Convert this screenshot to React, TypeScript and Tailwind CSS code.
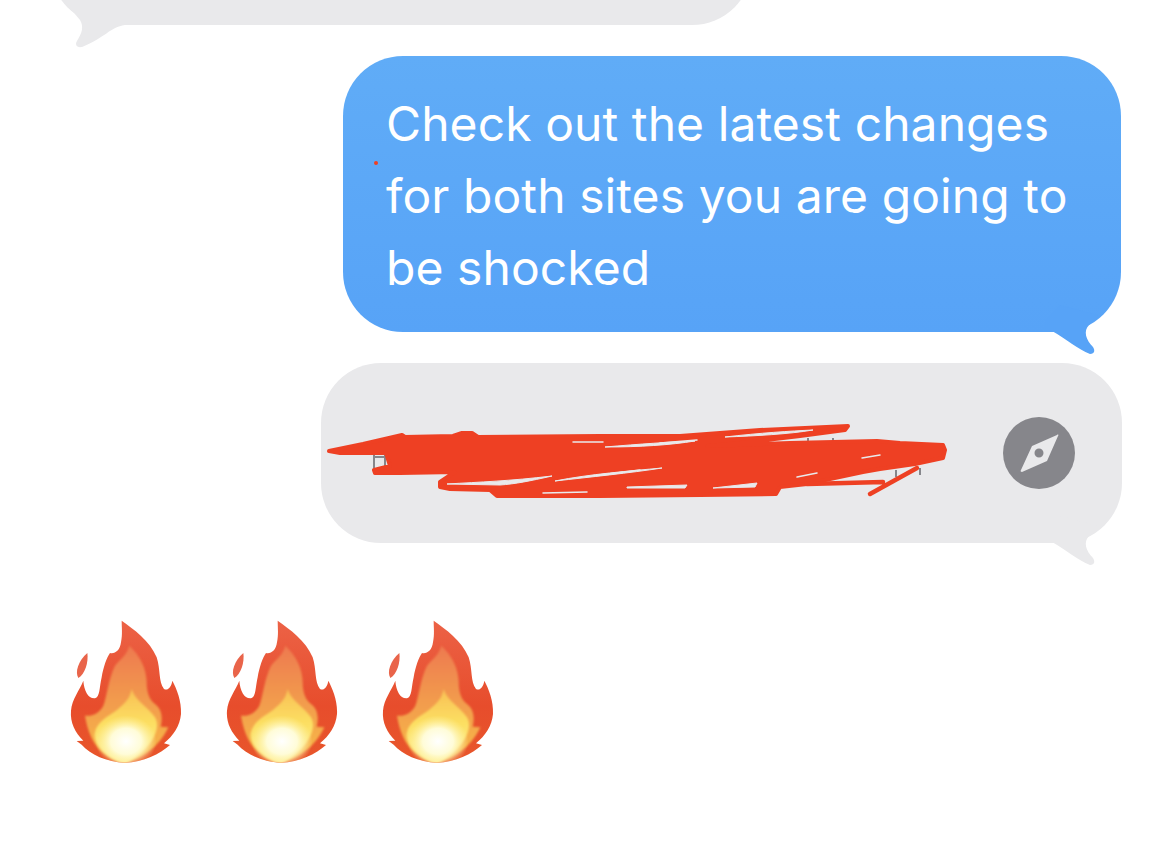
import React from 'react';

const FLAME_OUTLINE =
  'M245 60 C280 85 330 120 350 170 C362 205 355 245 372 265 C385 272 395 255 397 240 C410 265 425 300 423 340 C420 375 400 405 372 428 L390 433 C360 460 310 485 255 486 C200 485 150 460 125 432 L110 421 L130 420 C105 395 90 365 93 330 C96 295 118 270 130 240 C132 270 145 295 165 293 C180 290 178 260 185 230 C190 200 200 170 210 157 C225 160 240 150 243 125 C248 100 245 80 245 60 Z';

const Flame = ({ id }: { id: string }) => (
  <svg width="115" height="145" viewBox="90 55 345 435">
    <defs>
      <linearGradient id={`${id}-outer`} x1="0" y1="0" x2="0" y2="1">
        <stop offset="0" stopColor="#ec6246" />
        <stop offset="0.6" stopColor="#e74d2c" />
        <stop offset="1" stopColor="#e8562a" />
      </linearGradient>
      <linearGradient id={`${id}-mid`} x1="0" y1="0" x2="0" y2="1">
        <stop offset="0" stopColor="#ee7a50" />
        <stop offset="0.45" stopColor="#f29a4e" />
        <stop offset="1" stopColor="#f7bb47" />
      </linearGradient>
      <linearGradient id={`${id}-inner`} x1="0" y1="0" x2="0" y2="1">
        <stop offset="0" stopColor="#f8bf55" />
        <stop offset="0.45" stopColor="#fcdf62" />
        <stop offset="1" stopColor="#feef96" />
      </linearGradient>
      <radialGradient id={`${id}-core`}>
        <stop offset="0" stopColor="#ffffff" />
        <stop offset="0.5" stopColor="#fffcd8" />
        <stop offset="1" stopColor="#fff3a0" stopOpacity="0" />
      </radialGradient>
      <filter id={`${id}-soft`} x="-10%" y="-10%" width="120%" height="120%">
        <feGaussianBlur stdDeviation="3.5" />
      </filter>
      <clipPath id={`${id}-clip`}>
        <path d={FLAME_OUTLINE} />
      </clipPath>
    </defs>
    <path d="M142 157 C146 185 135 220 115 232 C104 215 115 180 142 157 Z" fill="#e9644a" />
    <path d={FLAME_OUTLINE} fill={`url(#${id}-outer)`} />
    <g clipPath={`url(#${id}-clip)`}>
      <path
        d="M268 135 C300 165 320 205 320 245 C320 275 328 298 345 310 C362 322 370 345 362 378 L385 380 C365 425 320 470 255 486 C200 478 150 440 135 345 C155 348 178 338 190 315 C200 290 205 235 225 195 C240 175 260 165 268 135 Z"
        fill={`url(#${id}-mid)`}
        filter={`url(#${id}-soft)`}
      />
      <path
        d="M275 265 C285 300 325 320 345 350 C365 385 335 445 255 490 C205 475 155 430 165 395 C175 355 215 345 240 320 C258 305 270 290 275 265 Z"
        fill={`url(#${id}-inner)`}
        filter={`url(#${id}-soft)`}
      />
      <ellipse cx="258" cy="422" rx="92" ry="78" fill={`url(#${id}-core)`} />
    </g>
  </svg>
);

const BubbleTail = ({ color, className }: { color: string; className: string }) => (
  <svg className={className} width="60" height="50" viewBox="1043 305 60 50">
    <path
      d="M1045 320 L1045 331 L1052 331 C1066 339 1078 349 1090 354 C1095 354 1095 350 1093 347 C1086 340 1083 331 1089 325 L1098 315 L1060 305 Z"
      fill={color}
    />
  </svg>
);

const App = () => {
  return (
    <div className="w-[1170px] h-[843px] bg-white overflow-hidden flex flex-col font-['Inter',sans-serif]">
      {/* previous message, cut off by the top of the screenshot */}
      <div className="relative ml-[50px] mt-[-95px] w-[702px] h-[120px] shrink-0 rounded-[60px] bg-[#e9e9eb]">
        <svg
          className="absolute left-[15px] top-[95px]"
          width="70"
          height="50"
          viewBox="65 0 70 50"
        >
          <path
            d="M125 25 C110 27 105 38 82 47 C76 48 75 44 77 41 C82 33 84 27 80 20 L70 8 L125 8 Z"
            fill="#e9e9eb"
          />
        </svg>
      </div>

      <div className="relative ml-[343px] mt-[31px] w-[778px] h-[276px] shrink-0 rounded-[60px] bg-gradient-to-b from-[#60acf7] to-[#57a3f7] pl-[43px] pt-[32px] text-white text-[48px] leading-[72px] font-normal tracking-[0.08px]">
        <p className="whitespace-nowrap">Check out the latest changes</p>
        <p className="whitespace-nowrap">for both sites you are going to</p>
        <p className="whitespace-nowrap">be shocked</p>
        <span className="absolute left-[31px] top-[105px] w-[4px] h-[4px] rounded-full bg-[#ee4023]" />
        <BubbleTail color="#57a3f7" className="absolute left-[700px] bottom-[-23px]" />
      </div>

      <div className="relative ml-[321px] mt-[31px] w-[801px] h-[180px] shrink-0 rounded-[60px] bg-[#e9e9eb] flex items-center justify-end pr-[47px]">
        <svg
          className="absolute left-0 top-0"
          width="640"
          height="150"
          viewBox="321 363 640 150"
        >
          <path
            d="M374 452 V468 M385 452 V468 M373 457 H386 M637 438 V446 M735 440 V446 M808 438 V445 M833 438 V445 M896 470 V477 M920 468 V475"
            stroke="#86868b"
            strokeWidth="2"
            fill="none"
          />
          <path
            d="M329 451 L363 444 L402 435 L405 437 L453 436 L462 433 L472 433 L478 437 L600 436 L680 436 L760 430 L848 426 L845 430 L800 436 L740 443 L707 446 L790 443 L877 441 L900 443 L943 445 L945 450 L943 458 L915 464 L880 469 L863 472 L830 479 L807 484 L780 487 L776 494 L700 495 L600 496 L497 496 L490 490 L450 489 L440 487 L440 482 L455 472 L400 473 L375 473 L374 470 L390 466 L386 453 L340 453 Z"
            fill="#ee4023"
            stroke="#ee4023"
            strokeWidth="4"
            strokeLinejoin="round"
          />
          <path
            d="M447 484 C480 482 510 481 552 476 C530 481 515 484 500 485 Z M555 481 C590 474 630 471 662 468 C630 473 590 477 555 481 Z M725 437 C760 433 790 431 813 430 C790 434 755 436 725 437 Z M605 447 C640 444 670 442 695 441 C670 445 640 447 605 447 Z M627 487 L687 485 L685 488 L627 488 Z M713 488 L757 483 L755 487 Z"
            fill="#e9e9eb"
            stroke="#e9e9eb"
            strokeWidth="1"
            strokeLinejoin="round"
          />
          <path
            d="M573 442 L603 442 M543 493 L587 492 M600 475 L640 470 M797 477 L817 473 M862 458 L880 455 M660 443 L697 440"
            stroke="#e9e9eb"
            strokeWidth="1.5"
            strokeLinecap="round"
            fill="none"
          />
          <path
            d="M870 494 L917 468 M807 484 L883 482"
            stroke="#ee4023"
            strokeWidth="4.5"
            strokeLinecap="round"
            fill="none"
          />
        </svg>
        <svg width="72" height="72" viewBox="0 0 72 72" className="relative shrink-0">
          <circle cx="36" cy="36" r="36" fill="#86868b" />
          <path
            fillRule="evenodd"
            d="M54 18 C55 17 56 18 55 19 L44 44 L19 55 C18 55 17 54 18 53 L29 29 Z M36 31.5 A4.5 4.5 0 1 0 36 40.5 A4.5 4.5 0 1 0 36 31.5 Z"
            fill="#e9e9eb"
          />
        </svg>
        <BubbleTail color="#e9e9eb" className="absolute left-[722px] bottom-[-23px]" />
      </div>

      <div className="ml-[70px] mt-[76px] flex gap-[41px]">
        <Flame id="flame-a" />
        <Flame id="flame-b" />
        <Flame id="flame-c" />
      </div>
    </div>
  );
};

export default App;
